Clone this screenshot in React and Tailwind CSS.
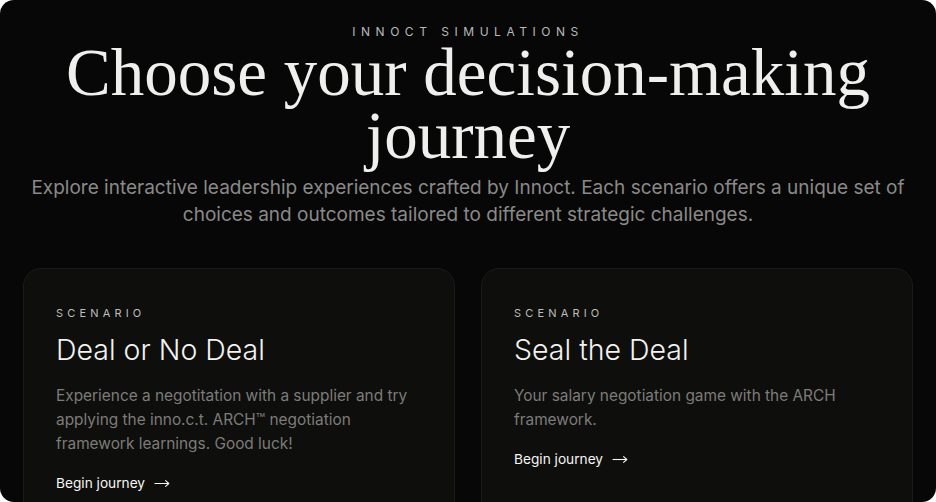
import React from "react";

function Arrow() {
  return (
    <svg width="16" height="9" viewBox="0 0 16 9" fill="none" className="mt-[1px]">
      <path d="M0.5 4.5H14.8" stroke="#f5f5f3" strokeWidth="1.1" />
      <path d="M11.6 1.6L14.8 4.5L11.6 7.4" stroke="#f5f5f3" strokeWidth="1.1" strokeLinecap="round" strokeLinejoin="round" />
    </svg>
  );
}

function Card({ title, desc }) {
  return (
    <div className="flex-1 rounded-[18px] border border-[#1b1b19] bg-[#0e0e0c] px-8 pt-[37px] pb-10 font-[Inter,'Liberation_Sans',sans-serif]">
      <div className="text-[11px] leading-[14px] tracking-[0.38em] text-[#bdbdbb]">SCENARIO</div>
      <h2 className="mt-[13px] text-[28.5px] leading-[34px] font-light text-[#f2f2f0]">{title}</h2>
      <p className="mt-[17px] text-[15.4px] leading-[24px] text-[#7c7c79]">{desc}</p>
      <div className="mt-[17px] flex items-center gap-[9px] text-[13.7px] leading-[20px] text-[#f5f5f3]">
        <span>Begin journey</span>
        <Arrow />
      </div>
    </div>
  );
}

export default function App() {
  return (
    <div className="w-[936px] h-[502px] bg-white">
      <div className="w-[936px] h-[502px] rounded-[14px] bg-[#070707] overflow-hidden flex flex-col items-center font-[Inter,'Liberation_Sans',sans-serif]">
        <div className="mt-[26px] text-[12px] leading-[12px] tracking-[0.46em] text-[#b9b9b7]">INNOCT SIMULATIONS</div>
        <h1 className="mt-[3px] text-center text-[67px] leading-[63px] text-[#efefed] w-[880px] font-['Liberation_Serif','DejaVu_Serif',serif]">
          Choose your decision-making journey
        </h1>
        <p className="mt-[7px] text-center text-[19px] leading-[27px] text-[#8a8a88] w-[900px]">
          Explore interactive leadership experiences crafted by Innoct. Each scenario offers a unique set of choices and outcomes tailored to different strategic challenges.
        </p>
        <div className="mt-[40px] flex gap-[26px] w-full px-[23px]">
          <Card
            title="Deal or No Deal"
            desc="Experience a negotitation with a supplier and try applying the inno.c.t. ARCH™ negotiation framework learnings. Good luck!"
          />
          <Card
            title="Seal the Deal"
            desc="Your salary negotiation game with the ARCH framework."
          />
        </div>
      </div>
    </div>
  );
}
